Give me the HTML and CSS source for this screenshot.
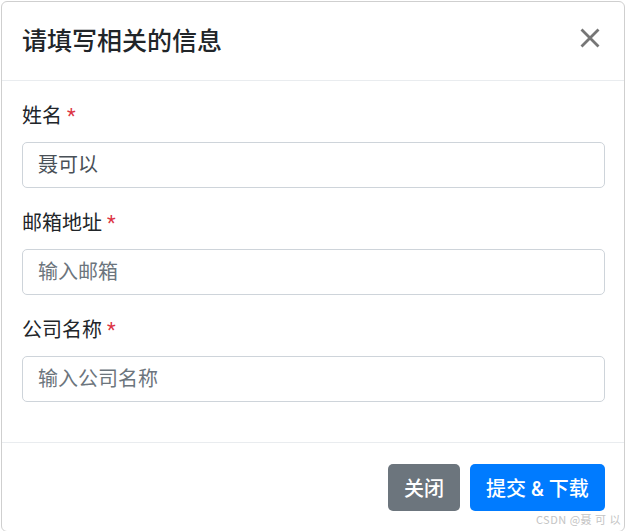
FILE: index.html
```html
<!DOCTYPE html>
<html lang="zh">
<head>
<meta charset="utf-8">
<link rel="stylesheet" href="styles.css">
</head>
<body>
<div class="modal">
  <div class="modal-header">
    <h4 class="modal-title">请填写相关的信息</h4>
    <button class="close" type="button" aria-label="Close">
      <svg width="20" height="20" viewBox="0 0 20 20"><path d="M1.5 1.5 L18.5 18.5 M18.5 1.5 L1.5 18.5" stroke="#767676" stroke-width="2.8" stroke-linecap="butt"/></svg>
    </button>
  </div>
  <div class="modal-body">
    <div class="form-group">
      <label class="label">姓名 <span class="req">*</span></label>
      <div class="input">聂可以</div>
    </div>
    <div class="form-group">
      <label class="label">邮箱地址 <span class="req">*</span></label>
      <div class="input placeholder">输入邮箱</div>
    </div>
    <div class="form-group">
      <label class="label">公司名称 <span class="req">*</span></label>
      <div class="input placeholder">输入公司名称</div>
    </div>
  </div>
  <div class="modal-footer">
    <button class="btn btn-secondary" type="button">关闭</button>
    <button class="btn btn-primary" type="button">提交 &amp; 下载</button>
  </div>
</div>
<div class="watermark">CSDN @聂 可 以</div>
</body>
</html>
```
FILE: styles.css
```css
html, body {
  margin: 0;
  padding: 0;
  background: #fff;
}
body {
  padding: 1px 1px 0 1px;
  font-family: Roboto, "Noto Sans CJK SC", "Noto Sans", sans-serif;
  color: #212529;
  position: relative;
  height: 530px;
  overflow: hidden;
}
.modal {
  border: 1px solid #cfcfcf;
  border-radius: 6px;
  background: #fff;
}
.modal-header {
  display: flex;
  align-items: flex-start;
  justify-content: space-between;
  padding: 19px 19px 19px 20px;
  border-bottom: 1px solid #e9ecef;
  height: 40px;
}
.modal-title {
  margin: 0;
  font-size: 25px;
  font-weight: 500;
  line-height: 42px;
  color: #212529;
}
.close {
  background: none;
  border: 0;
  padding: 0;
  margin: 7px 5px 0 0;
  width: 20px;
  height: 20px;
  display: flex;
  cursor: pointer;
}
.modal-body {
  padding: 20px 19px 20px 20px;
}
.form-group {
  margin-bottom: 20px;
}
.label {
  display: block;
  font-size: 20px;
  line-height: 30px;
  margin-bottom: 11px;
  color: #212529;
}
.req {
  color: #dc3545;
}
.input {
  height: 44px;
  border: 1px solid #ced4da;
  border-radius: 5px;
  padding: 0 15px;
  font-size: 20px;
  line-height: 44px;
  color: #495057;
}
.input.placeholder {
  color: #6c757d;
}
.modal-footer {
  display: flex;
  justify-content: flex-end;
  gap: 10px;
  border-top: 1px solid #e9ecef;
  padding: 21px 19px 20px 19px;
}
.btn {
  height: 47px;
  border: 0;
  border-radius: 5px;
  padding: 0 16px;
  font-family: Roboto, "Noto Sans CJK SC", sans-serif;
  font-size: 20px;
  font-weight: 500;
  color: #fff;
  cursor: pointer;
}
.btn-secondary {
  background: #6c757d;
  width: 72px;
}
.btn-primary {
  background: #007bff;
  width: 135px;
}
.watermark {
  position: absolute;
  right: 5px;
  bottom: 4px;
  font-size: 11px;
  color: #c4c4c4;
  font-family: "Noto Sans CJK SC", sans-serif;
  letter-spacing: 0.5px;
}
```
